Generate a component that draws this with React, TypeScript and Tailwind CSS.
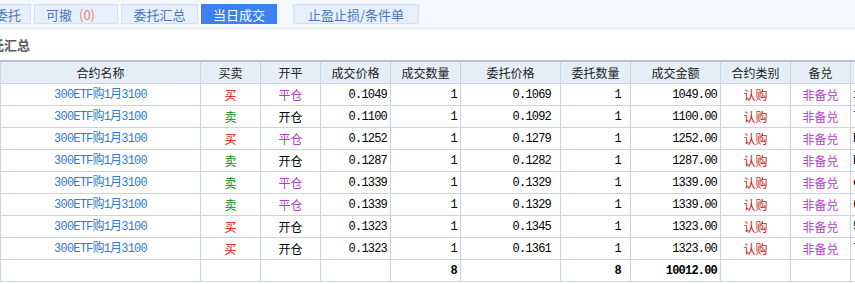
import React from "react";

const rows = [
  { bs: "买", oc: "平仓", p: "0.1049", q: "1", op: "0.1069", oq: "1", amt: "1049.00", x: "1" },
  { bs: "卖", oc: "开仓", p: "0.1100", q: "1", op: "0.1092", oq: "1", amt: "1100.00", x: "7" },
  { bs: "买", oc: "平仓", p: "0.1252", q: "1", op: "0.1279", oq: "1", amt: "1252.00", x: "D" },
  { bs: "卖", oc: "开仓", p: "0.1287", q: "1", op: "0.1282", oq: "1", amt: "1287.00", x: "D" },
  { bs: "卖", oc: "平仓", p: "0.1339", q: "1", op: "0.1329", oq: "1", amt: "1339.00", x: "e" },
  { bs: "卖", oc: "平仓", p: "0.1339", q: "1", op: "0.1329", oq: "1", amt: "1339.00", x: "6" },
  { bs: "买", oc: "开仓", p: "0.1323", q: "1", op: "0.1345", oq: "1", amt: "1323.00", x: "5" },
  { bs: "买", oc: "开仓", p: "0.1323", q: "1", op: "0.1361", oq: "1", amt: "1323.00", x: "7" },
];

const mono = "font-['Liberation_Mono','Noto_Sans_CJK_SC',monospace] text-[12px] tracking-[-0.8px]";
const cjk = "font-['Noto_Sans_CJK_SC',sans-serif] text-[12px]";
const cell = "h-full border-r border-[#cbd4de] flex items-center shrink-0";

export default function App() {
  return (
    <div className="w-[855px] h-[284px] overflow-hidden bg-white relative">
      {/* tab bar */}
      <div className="h-[29px] bg-[#f5f9fe] border-b border-[#dfe5ec] flex items-start pt-[4px] font-['Noto_Sans_CJK_SC',sans-serif] text-[13px] leading-none">
        <div className="flex gap-[3px] ml-[-17px]">
          <div className="w-[48px] h-[20px] bg-[#e7effc] border border-[#d3dff2] text-[#4a78b8] flex items-center justify-end pr-[9px]">委托</div>
          <div className="w-[84px] h-[20px] bg-[#e7effc] border border-[#d3dff2] text-[#4a78b8] flex items-center pl-[11px]">
            可撤<span className="ml-[7px] text-[#e8866c]">(0)</span>
          </div>
          <div className="w-[77px] h-[20px] bg-[#e7effc] border border-[#d3dff2] text-[#4a78b8] flex items-center justify-center">委托汇总</div>
          <div className="w-[76px] h-[20px] bg-[#3b82f0] border border-[#3b82f0] text-white flex items-center justify-center">当日成交</div>
          <div className="w-[126px] h-[20px] ml-[13px] bg-[#e7effc] border border-[#d3dff2] text-[#4a78b8] flex items-center justify-center">止盈止损/条件单</div>
        </div>
      </div>
      {/* title */}
      <div className="h-[31px] flex items-center ml-[-22px] font-['Noto_Sans_CJK_SC',sans-serif] text-[13px] font-bold text-[#5a5a5a]">
        委托汇总
      </div>
      {/* table */}
      <div className="border-t-2 border-[#b9c3ce] w-[960px]">
        <div className="flex h-[22px] bg-[#e8eef6] border-b border-l border-[#cbd4de] text-[#222]">
          {[
            ["合约名称", 200],
            ["买卖", 60],
            ["开平", 60],
            ["成交价格", 70],
            ["成交数量", 70],
            ["委托价格", 100],
            ["委托数量", 70],
            ["成交金额", 90],
            ["合约类别", 70],
            ["备兑", 60],
            ["", 100],
          ].map(([t, w], i) => (
            <div key={i} className={`${cell} ${cjk} justify-center`} style={{ width: w as number }}>
              {t}
            </div>
          ))}
        </div>
        {rows.map((r, i) => (
          <div key={i} className="flex h-[22px] border-b border-l border-[#cbd4de]">
            <div className={`${cell} w-[200px] justify-center ${mono} text-[#2d7bd0]`}>300ETF购1月3100</div>
            <div className={`${cell} w-[60px] justify-center ${cjk} ${r.bs === "买" ? "text-[#ee0000]" : "text-[#0a8a0a]"}`}>{r.bs}</div>
            <div className={`${cell} w-[60px] justify-center ${cjk} ${r.oc === "平仓" ? "text-[#b140c6]" : "text-black"}`}>{r.oc}</div>
            <div className={`${cell} w-[70px] justify-end pr-[3px] ${mono} text-black`}>{r.p}</div>
            <div className={`${cell} w-[70px] justify-end pr-[3px] ${mono} text-black`}>{r.q}</div>
            <div className={`${cell} w-[100px] justify-end pr-[9px] ${mono} text-black`}>{r.op}</div>
            <div className={`${cell} w-[70px] justify-end pr-[9px] ${mono} text-black`}>{r.oq}</div>
            <div className={`${cell} w-[90px] justify-end pr-[3px] ${mono} text-black`}>{r.amt}</div>
            <div className={`${cell} w-[70px] justify-center ${cjk} text-[#cc1414]`}>认购</div>
            <div className={`${cell} w-[60px] justify-center ${cjk} text-[#b140c6]`}>非备兑</div>
            <div className={`${cell} w-[100px] pl-[2px] ${mono} text-black`}>{r.x}</div>
          </div>
        ))}
        <div className="flex h-[22px] border-b border-l border-[#cbd4de] font-bold">
          <div className={`${cell} w-[200px]`} />
          <div className={`${cell} w-[60px]`} />
          <div className={`${cell} w-[60px]`} />
          <div className={`${cell} w-[70px]`} />
          <div className={`${cell} w-[70px] justify-end pr-[3px] ${mono} text-black`}>8</div>
          <div className={`${cell} w-[100px]`} />
          <div className={`${cell} w-[70px] justify-end pr-[9px] ${mono} text-black`}>8</div>
          <div className={`${cell} w-[90px] justify-end pr-[3px] ${mono} text-black`}>10012.00</div>
          <div className={`${cell} w-[70px]`} />
          <div className={`${cell} w-[60px]`} />
          <div className={`${cell} w-[100px]`} />
        </div>
      </div>
    </div>
  );
}
